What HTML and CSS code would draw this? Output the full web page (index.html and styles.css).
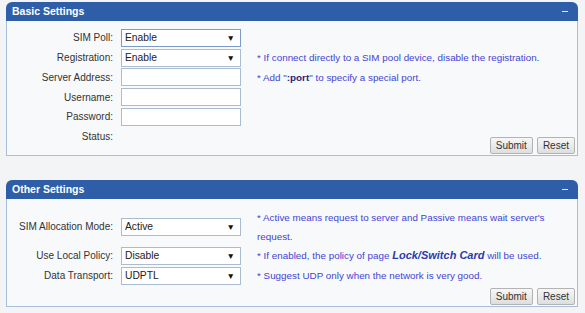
FILE: index.html
```html
<!DOCTYPE html>
<html>
<head>
  <title>SIM Settings</title>
  <link rel="stylesheet" href="styles.css">
</head>
<body>
  <div class="panel">
    <div class="panel-head">
      <span>Basic Settings</span>
      <span class="collapse"></span>
    </div>
    <div class="panel-body">
      <label class="field-label">SIM Poll:</label>
      <span class="select-wrap focus"><select><option>Enable</option></select></span>
      <span class="hint"></span>

      <label class="field-label">Registration:</label>
      <span class="select-wrap"><select><option>Enable</option></select></span>
      <span class="hint">* If connect directly to a SIM pool device, disable the registration.</span>

      <label class="field-label">Server Address:</label>
      <input type="text">
      <span class="hint">* Add "<b class="key">:port</b>" to specify a special port.</span>

      <label class="field-label">Username:</label>
      <input type="text">
      <span class="hint"></span>

      <label class="field-label">Password:</label>
      <input type="password">
      <span class="hint"></span>

      <label class="field-label status">Status:</label>
      <span></span>
      <div class="actions inline">
        <button>Submit</button>
        <button>Reset</button>
      </div>
    </div>
  </div>

  <div class="panel">
    <div class="panel-head">
      <span>Other Settings</span>
      <span class="collapse"></span>
    </div>
    <div class="panel-body roomy">
      <label class="field-label">SIM Allocation Mode:</label>
      <span class="select-wrap"><select><option>Active</option></select></span>
      <span class="hint">* Active means request to server and Passive means wait server's request.</span>

      <label class="field-label">Use Local Policy:</label>
      <span class="select-wrap"><select><option>Disable</option></select></span>
      <span class="hint">* If enabled, the policy of page <b class="page-link">Lock/Switch Card</b> will be used.</span>

      <label class="field-label">Data Transport:</label>
      <span class="select-wrap"><select><option>UDPTL</option></select></span>
      <span class="hint">* Suggest UDP only when the network is very good.</span>

      <div class="actions">
        <button>Submit</button>
        <button>Reset</button>
      </div>
    </div>
  </div>
</body>
</html>
```

FILE: styles.css
```css
body {
  margin: 0;
  padding: 2px 7px 0 6px;
  background-color: #f3f4f5;
  font-family: "Liberation Sans", Arial, sans-serif;
  font-size: 10px;
  color: #333333;
}

.panel {
  width: 572px;
  margin-bottom: 24px;
}

.panel:last-child {
  margin-bottom: 0;
}

.panel-head {
  height: 19px;
  line-height: 19px;
  padding: 0 10px 0 6px;
  background-color: #2f5ea8;
  border-radius: 6px 6px 0 0;
  color: #ffffff;
  font-weight: bold;
  font-size: 10.5px;
  display: flex;
  align-items: center;
  justify-content: space-between;
}

.collapse {
  width: 6px;
  height: 1px;
  background-color: #dfe8f5;
}

.panel-body {
  display: grid;
  grid-template-columns: 106px 120px 1fr;
  grid-auto-rows: minmax(19.75px, auto);
  column-gap: 8px;
  align-items: center;
  padding: 7px 2px 1px 0;
  background-color: #f8f9fa;
  border: 1px solid #a9bfd9;
  border-top: none;
}

.panel-body.roomy {
  grid-auto-rows: minmax(20px, auto);
  padding-top: 9px;
  padding-bottom: 0;
}

.field-label {
  text-align: right;
  white-space: nowrap;
}

.field-label.status {
  align-self: start;
  line-height: 19.75px;
}

select,
input {
  box-sizing: border-box;
  width: 120px;
  height: 18px;
  margin: 0;
  border: 1px solid #a9bcd2;
  background-color: #ffffff;
  font-family: inherit;
  font-size: 10.3px;
  color: #222222;
}

select {
  appearance: none;
  -webkit-appearance: none;
  padding: 0 0 0 3px;
  border-radius: 0;
}

.select-wrap {
  position: relative;
  display: block;
  height: 18px;
}

.select-wrap.focus select {
  border-color: #7d9bc8;
}

.select-wrap::after {
  content: "\25BC";
  position: absolute;
  right: 6px;
  top: 4px;
  font-size: 8.5px;
  line-height: 10px;
  color: #111111;
  pointer-events: none;
}

.hint {
  padding: 0 14px 0 8px;
  line-height: 19px;
  font-size: 9.85px;
  color: #4444d4;
}

.hint .key {
  color: #1c1f7a;
}

.page-link {
  font-style: italic;
  font-size: 11px;
  color: #2b3aae;
}

.actions {
  grid-column: 1 / -1;
  justify-self: end;
  display: flex;
  gap: 4px;
  margin: 2px 0 0;
}

.actions.inline {
  grid-column: 3;
  align-self: end;
  padding-top: 10px;
  margin: 0;
}

button {
  height: 17px;
  padding: 0 5px;
  border: 1px solid #b3b3b3;
  border-radius: 2px;
  background: linear-gradient(#f7f7f7, #dedede);
  font-family: inherit;
  font-size: 10px;
  color: #333333;
  cursor: pointer;
}

button:hover {
  filter: brightness(95%);
}
```
